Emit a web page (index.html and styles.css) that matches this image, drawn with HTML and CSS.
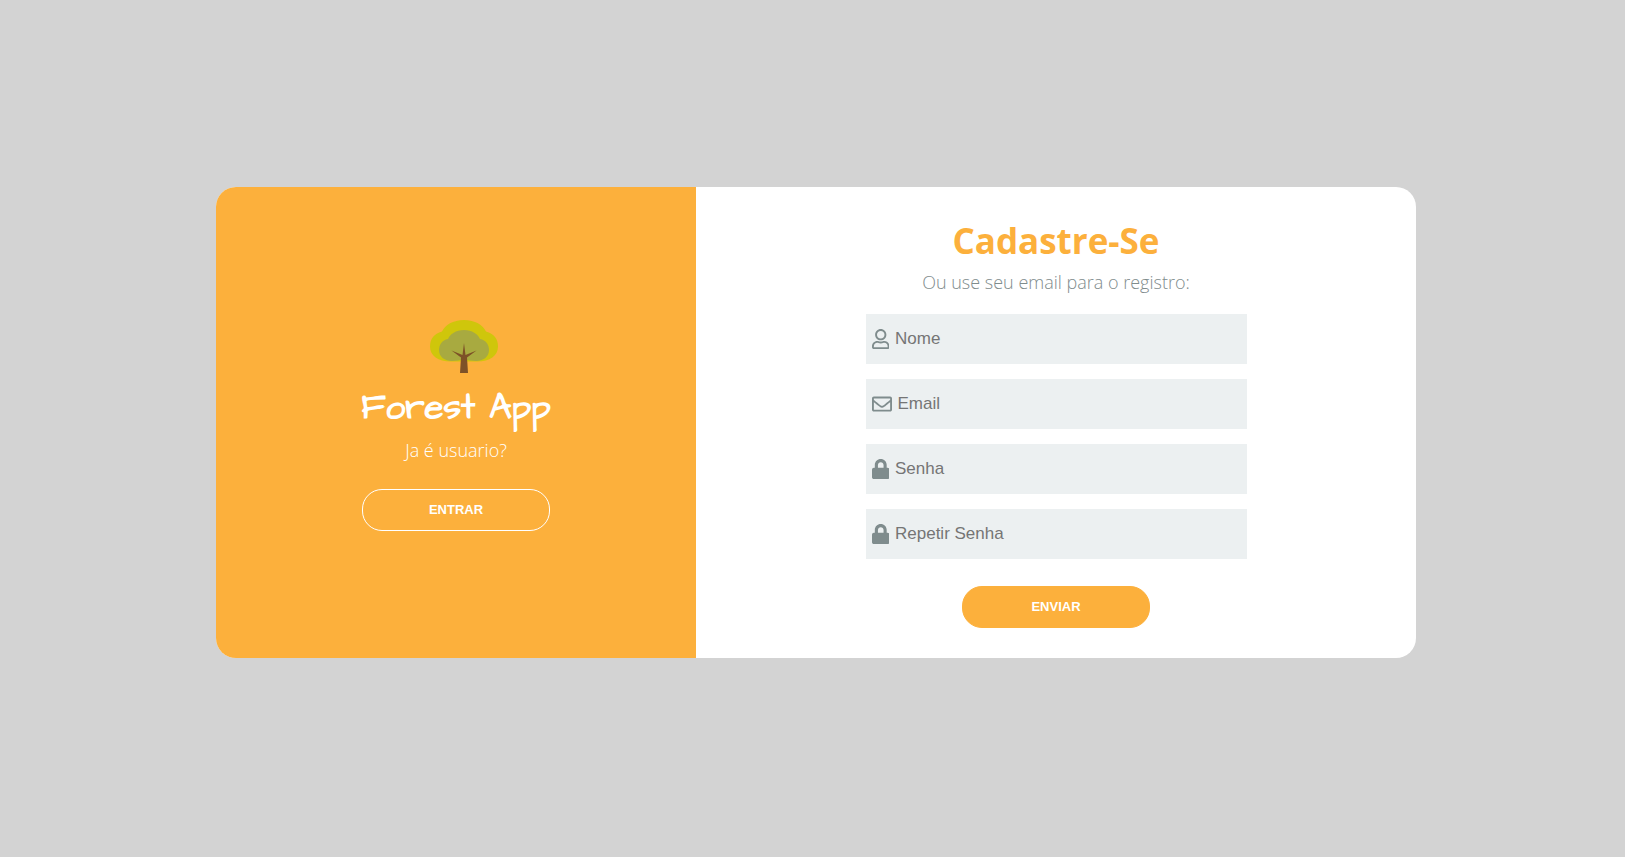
FILE: index.html
```html
<!DOCTYPE html>
<html lang="pt-BR">
<head>
<meta charset="utf-8">
<meta name="viewport" content="width=device-width, initial-scale=1">
<title>Forest App</title>
<link rel="stylesheet" href="styles.css">
</head>
<body>
<svg class="sprite" aria-hidden="true">
  <symbol id="lock" viewBox="0 0 448 512"><path d="M400 224h-24v-72C376 68.200 307.800 0 224 0S72 68.200 72 152v72H48c-26.500 0-48 21.500-48 48v192c0 26.500 21.500 48 48 48h352c26.500 0 48-21.500 48-48V272c0-26.500-21.500-48-48-48zm-104 0H152v-72c0-39.700 32.300-72 72-72s72 32.300 72 72v72z"/></symbol>
</svg>
<main class="card">
  <section class="welcome">
    <svg class="tree" viewBox="0 0 70 56" aria-hidden="true">
      <path fill="#cfc60b" d="M35 1C46 1 54 6 57 12.500C65 14.500 69 20 69 27.500C69 36.500 61 42.500 48 42.500H22C9 42.500 1 36.500 1 27.500C1 20 5 14.500 13 12.500C16 6 24 1 35 1Z"/>
      <path fill="#a8aa40" d="M35 11C43 11 49 15 51 20C57 21 60 26 60 31C60 38 54 42 47 42C43 42 39 41 35 40C31 41 27 42 23 42C16 42 10 38 10 31C10 26 13 21 19 20C21 15 27 11 35 11Z"/>
      <path fill="#7d5127" d="M35 24L36.500 36L47.500 31.500L38 38.500L39 54H31L32 38.500L22.500 31.500L33.500 36Z"/>
    </svg>
    <h1 class="brand">Forest App</h1>
    <p class="lead">Ja é usuario?</p>
    <button class="button button-outline" type="button">ENTRAR</button>
  </section>
  <section class="signup">
    <h2 class="title">Cadastre-Se</h2>
    <p class="lead lead-muted">Ou use seu email para o registro:</p>
    <form class="form">
      <label class="field">
        <svg class="icon" viewBox="0 0 448 512" aria-hidden="true"><path d="M313.600 304c-28.700 0-42.500 16-89.600 16-47.100 0-60.800-16-89.600-16C60.200 304 0 364.200 0 438.400V464c0 26.500 21.500 48 48 48h352c26.500 0 48-21.500 48-48v-25.600c0-74.200-60.200-134.400-134.400-134.400zM400 464H48v-25.600c0-47.600 38.800-86.400 86.400-86.400 14.600 0 38.300 16 89.600 16 51.700 0 74.900-16 89.600-16 47.600 0 86.400 38.800 86.400 86.400V464zM224 288c79.500 0 144-64.500 144-144S303.500 0 224 0 80 64.500 80 144s64.500 144 144 144zm0-240c52.900 0 96 43.100 96 96s-43.100 96-96 96-96-43.100-96-96 43.100-96 96-96z"/></svg>
        <input class="input" type="text" placeholder="Nome" aria-label="Nome">
      </label>
      <label class="field">
        <svg class="icon" viewBox="0 0 512 512" aria-hidden="true"><path d="M464 64H48C21.490 64 0 85.490 0 112v288c0 26.510 21.490 48 48 48h416c26.510 0 48-21.490 48-48V112c0-26.510-21.490-48-48-48zm0 48v40.805c-22.422 18.259-58.168 46.651-134.587 106.490-16.841 13.247-50.201 45.072-73.413 44.701-23.208.375-56.579-31.459-73.413-44.701C106.180 199.465 70.425 171.067 48 152.805V112h416zM48 400V214.398c22.914 18.251 55.409 43.862 104.938 82.646 21.857 17.205 60.134 55.186 103.062 54.955 42.717.231 80.509-37.199 103.053-54.947 49.528-38.783 82.032-64.401 104.947-82.653V400H48z"/></svg>
        <input class="input" type="email" placeholder="Email" aria-label="Email">
      </label>
      <label class="field">
        <svg class="icon" viewBox="0 0 448 512" aria-hidden="true"><use href="#lock"/></svg>
        <input class="input" type="password" placeholder="Senha" aria-label="Senha">
      </label>
      <label class="field">
        <svg class="icon" viewBox="0 0 448 512" aria-hidden="true"><use href="#lock"/></svg>
        <input class="input" type="password" placeholder="Repetir Senha" aria-label="Repetir Senha">
      </label>
      <button class="button button-solid" type="submit">ENVIAR</button>
    </form>
  </section>
</main>
</body>
</html>
```
FILE: styles.css
```css
* { box-sizing: border-box; }

body {
  margin: 0;
  min-height: 100vh;
  padding: 0 0 12px 7px;
  display: flex;
  align-items: center;
  justify-content: center;
  background: #d3d3d3;
  font-family: "Open Sans", sans-serif;
}

.sprite { position: absolute; width: 0; height: 0; }

.card {
  display: grid;
  grid-template-columns: 2fr 3fr;
  width: 100%;
  max-width: 1200px;
  border-radius: 20px;
  overflow: hidden;
  background: #fff;
}

.welcome, .signup {
  display: flex;
  flex-direction: column;
  align-items: center;
}

.welcome {
  justify-content: center;
  background: #fcb03c;
  color: #fff;
}

.signup { padding: 30px 20px; }

.tree { width: 70px; height: 56px; margin: 5px 0 0 15px; }

.brand {
  margin: 7px 0 4px;
  font-family: "Architects Daughter", Lato, sans-serif;
  font-size: 35px;
  line-height: 52px;
  font-weight: 700;
}

.title {
  margin: 0;
  font-size: 35px;
  line-height: 48px;
  font-weight: 700;
  color: #fcb03c;
}

.lead {
  margin: 0;
  font-size: 18px;
  line-height: 24px;
  font-weight: 300;
}

.lead-muted { margin: 5px 0 20px; color: #7f8c8d; }

.form {
  display: flex;
  flex-direction: column;
  align-items: center;
  gap: 15px;
  width: 100%;
  max-width: 381px;
}

.field {
  display: flex;
  align-items: center;
  width: 100%;
  height: 50px;
  padding: 0 6px;
  gap: 6px;
  background: #ecf0f1;
}

.icon { height: 20px; flex: none; fill: #7f8c8d; }

.input {
  flex: 1;
  min-width: 0;
  padding: 0;
  border: 0;
  outline: 0;
  background: transparent;
  font: 17px "Liberation Sans", Arial, sans-serif;
}

.input::placeholder { color: #757575; }

.button {
  width: 188px;
  height: 42px;
  padding: 0 0 2px;
  border: 1px solid #fff;
  border-radius: 20px;
  color: #fff;
  font: bold 13px "Liberation Sans", Arial, sans-serif;
  cursor: pointer;
}

.button-outline { margin-top: 27px; background: transparent; }

.button-solid { margin-top: 12px; border-color: #fcb03c; background: #fcb03c; }
```
